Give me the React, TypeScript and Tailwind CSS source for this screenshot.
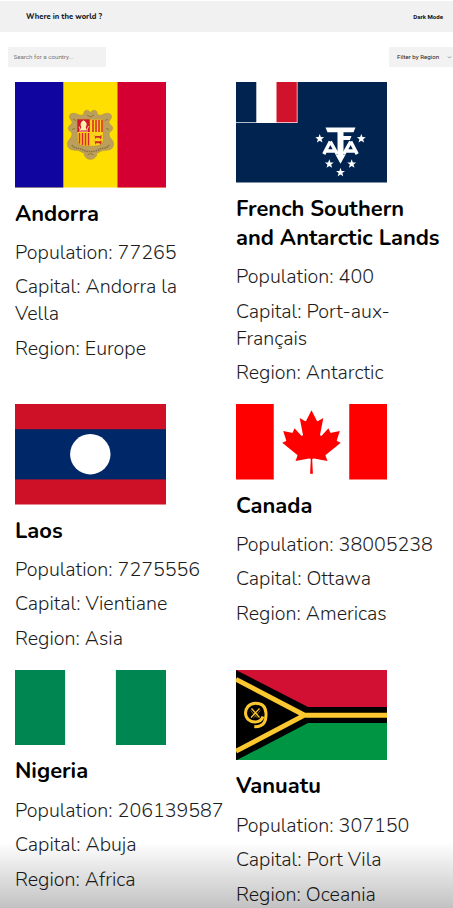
import type { ReactNode } from 'react';

function Star({ x, y, r = 4.7 }: { x: number; y: number; r?: number }) {
  const points = Array.from({ length: 10 }, (_, i) => {
    const radius = i % 2 === 0 ? r : r * 0.42;
    const angle = (Math.PI / 5) * i - Math.PI / 2;
    return `${(x + radius * Math.cos(angle)).toFixed(2)},${(y + radius * Math.sin(angle)).toFixed(2)}`;
  }).join(' ');
  return <polygon points={points} fill="#fff" />;
}

function Andorra() {
  return (
    <svg viewBox="0 0 151 105.5" preserveAspectRatio="none" className="block h-[105.5px] w-[151px]">
      <rect width="151" height="105.5" fill="#fedf00" />
      <rect width="48.3" height="105.5" fill="#10069f" />
      <rect x="102.5" width="48.5" height="105.5" fill="#d50032" />
      <path
        d="M75.500 30.500c-2-3-6.500-3-6.500.5-.3 2.500-3 2.500-5 2-4.500-2.500-9.500-2.500-9.500 1.800 0 2.700 3 3.500 2.500 6-1 2.500-4.500 3.500-3.500 6.500 1 2.500 3.500 2 3.500 5 0 4-4.500 5.500-4.500 9.500 0 5.500 4.500 6.500 9 6.500 3 0 4.500 2 7.500 2.500 0 4 3 6.500 6.500 6.500s6.500-2.500 6.500-6.500c3-.5 4.500-2.500 7.500-2.500 4.500 0 9-1 9-6.500 0-4-4.500-5.500-4.500-9.500 0-3 2.500-2.500 3.500-5 1-3-2.500-4-3.500-6.500-.5-2.500 2.500-3.300 2.500-6 0-4.300-5-4.300-9.500-1.800-2 .5-4.700.5-5-2 0-3.500-4.500-3.500-6.500-.5z"
        fill="#bd9f5c"
        stroke="#ab8e4c"
        strokeWidth=".6"
      />
      <path d="M57 63c2 4 6 2.500 9 4 6 3.500 13 3.500 19 0 3-1.500 7 0 9-4" fill="none" stroke="#84703c" strokeWidth="1.500" strokeDasharray="1.500 .8" />
      <path d="M58 37l3 1.500M93 37l-3 1.500M57 47.500l3-1M94 47.500l-3-1M72 33l3.500 2 3.500-2M72.500 73l3-1.500 3 1.500" fill="none" stroke="#8b763f" strokeWidth="1" />
      <path d="M62.300 37.300h26v20c0 6-4 7-13 7s-13-1-13-7z" fill="#fcd31a" stroke="#b18b3d" strokeWidth=".6" />
      <rect x="62.300" y="37.300" width="12.500" height="12.700" fill="#cf182c" />
      <path d="M68.500 38.300c-3.300 2-3.300 4.700-2.200 6.700l-1 3h6.400l-1-3c1.700-2 1.300-4.700-2.200-6.700z" fill="#fff2a8" />
      <path d="M64 44.500l1.500 4M73.500 44l-1.500 4M64 49h9" stroke="#ffe9c2" strokeWidth=".9" />
      <path d="M78 38v12M81 38v12M84 38v12M87 38v12M64.500 51v10.500M67.500 51v12M70.500 51v12.500M73.500 51v12.500" stroke="#d5272d" strokeWidth="1.500" />
      <path d="M78 52.500l2 1.500h5l1.500-1v3l-1 1.500-.8-1.800h-3.700l-1 1.800v-3zM78 58l2 1.300h5l1.500-.8v2.700l-1 1.500-.8-1.500h-3.700l-1 1.500v-3z" fill="#c92b25" />
    </svg>
  );
}

function SouthernLands() {
  return (
    <svg viewBox="0 0 151 100.500" preserveAspectRatio="none" className="block h-[100.5px] w-[151px]">
      <rect width="151" height="100.500" fill="#00244f" />
      <rect width="61.500" height="41" fill="#fff" />
      <rect width="20.300" height="40.300" fill="#00244f" />
      <rect x="40.500" width="20.300" height="40.300" fill="#d1122b" />
      <Star x={83.700} y={56.700} />
      <Star x={125.300} y={56.700} />
      <Star x={93.300} y={82} />
      <Star x={115.700} y={82} />
      <Star x={104.500} y={90.500} />
      <path d="M89.500 45.500h30l-2 4.700h-10v3.700h8l-1.600 4h-6.400v14.800h2l-5 9-5-9h2v-22.500h-10z" fill="#fff" />
      <path d="M94.300 59.500l-6.500 12.600M94.300 59.500l7 12.600M90.500 69h9M114.700 59.500l-7 12.600M114.700 59.500l6.500 12.600M109.500 69h9" stroke="#fff" strokeWidth="3.400" />
    </svg>
  );
}

function Laos() {
  return (
    <svg viewBox="0 0 151 100.500" preserveAspectRatio="none" className="block h-[100.5px] w-[151px]">
      <rect width="151" height="100.500" fill="#ce1126" />
      <rect y="25.200" width="151" height="50.200" fill="#002868" />
      <circle cx="75.300" cy="50.200" r="20.200" fill="#fff" />
    </svg>
  );
}

function Canada() {
  return (
    <svg viewBox="0 0 9600 4800" className="block h-[75.5px] w-[151px]">
      <rect width="9600" height="4800" fill="#fff" />
      <path
        d="M0 0h2400v4800H0zM7200 0h2400v4800H7200zM4890 4430l-45-863a95 95 0 0 1 111-98l859 151-116-320a65 65 0 0 1 20-73l941-762-212-99a65 65 0 0 1-34-79l186-572-542 115a65 65 0 0 1-73-38l-105-247-423 454a65 65 0 0 1-111-57l204-1052-327 189a65 65 0 0 1-91-27l-332-652-332 652a65 65 0 0 1-91 27l-327-189 204 1052a65 65 0 0 1-111 57l-423-454-105 247a65 65 0 0 1-73 38l-542-115 186 572a65 65 0 0 1-34 79l-212 99 941 762a65 65 0 0 1 20 73l-116 320 859-151a95 95 0 0 1 111 98l-45 863z"
        fill="#f00"
      />
    </svg>
  );
}

function Nigeria() {
  return (
    <svg viewBox="0 0 6 3" className="block h-[75.5px] w-[151px]">
      <path d="M0 0h2v3H0zM4 0h2v3H4z" fill="#008751" />
      <path d="M2 0h2v3H2z" fill="#fff" />
    </svg>
  );
}

function Vanuatu() {
  return (
    <svg viewBox="0 0 151 90.500" preserveAspectRatio="none" className="block h-[90.5px] w-[151px]">
      <rect width="151" height="45.200" fill="#d21034" />
      <rect y="45.200" width="151" height="45.300" fill="#009543" />
      <path d="M0 0l72 37h79v16H72L0 90.500z" fill="#000" />
      <path d="M0 9.300l68.500 35.900H151M0 81.200l68.500-36" fill="none" stroke="#fdc82f" strokeWidth="4.900" />
      <path d="M18.300 56.600c10 .5 12-6 11.700-13.500-.5-7-5-9.800-10.500-9.800-6.500 0-10 5-10 9.700 0 5.500 4.500 9 9.500 9 4 0 7-2.500 8-5.500" fill="none" stroke="#fdc82f" strokeWidth="3" />
      <path d="M15.500 38.500l8 9M23.500 38.500l-8.500 9" stroke="#fdc82f" strokeWidth="1.300" />
      <path d="M14.500 40.500l7 7.500M24.500 40.500l-7 7.500" stroke="#fdc82f" strokeWidth=".5" />
    </svg>
  );
}

interface CountryProps {
  name: string;
  population: number;
  capital: string;
  region: string;
  flag: ReactNode;
}

const countries: CountryProps[] = [
  { name: 'Andorra', population: 77265, capital: 'Andorra la Vella', region: 'Europe', flag: <Andorra /> },
  { name: 'French Southern and Antarctic Lands', population: 400, capital: 'Port-aux-Français', region: 'Antarctic', flag: <SouthernLands /> },
  { name: 'Laos', population: 7275556, capital: 'Vientiane', region: 'Asia', flag: <Laos /> },
  { name: 'Canada', population: 38005238, capital: 'Ottawa', region: 'Americas', flag: <Canada /> },
  { name: 'Nigeria', population: 206139587, capital: 'Abuja', region: 'Africa', flag: <Nigeria /> },
  { name: 'Vanuatu', population: 307150, capital: 'Port Vila', region: 'Oceania', flag: <Vanuatu /> },
];

function Country({ name, population, capital, region, flag }: CountryProps) {
  return (
    <article>
      {flag}
      <h2 className="mt-[12px] max-w-[209px] text-[21.9px] leading-[29.5px] font-bold text-black">{name}</h2>
      <div className="mt-[9.700px] flex max-w-[209px] flex-col gap-[7.500px] text-[19.650px] leading-[27px] font-light text-[#1c1c1c]">
        <p>Population: {population}</p>
        <p className="max-w-[185px]">Capital: {capital}</p>
        <p>Region: {region}</p>
      </div>
    </article>
  );
}

export default function App() {
  return (
    <div className="relative h-[908px] w-[453px] overflow-hidden bg-white pt-px font-['Nunito','Open_Sans',sans-serif]">
      <header className="flex h-[31px] items-center justify-between bg-[#f1f1f1] pr-[10px] pl-[26px]">
        <h1 className="text-[7.550px] font-extrabold text-[#17222b]">Where in the world ?</h1>
        <button className="font-['Roboto',sans-serif] text-[6.100px] font-bold text-[#111]">Dark Mode</button>
      </header>
      <div className="mt-[15px] flex h-5 items-center justify-between pl-2 font-['Roboto',sans-serif] text-[6.200px]">
        <input
          placeholder="Search for a country..."
          className="h-5 w-[98px] bg-[#f2f2f2] px-[5.500px] placeholder:text-[#777] placeholder:opacity-100"
        />
        <button className="flex h-5 w-16 items-center justify-between bg-[#f2f2f2] pt-px pr-[1px] pl-2 text-[#222]">
          Filter by Region
          <svg viewBox="0 0 6 4" className="h-[3px] w-[5px]" fill="none" stroke="#777">
            <path d="M1 .7l2 2 2-2" />
          </svg>
        </button>
      </div>
      <main className="mt-[15px] grid grid-cols-[221px_1fr] gap-y-[18px] pl-[15px]">
        {countries.map((country) => (
          <Country key={country.name} {...country} />
        ))}
      </main>
      <div className="pointer-events-none absolute inset-x-0 bottom-0 h-[66px] bg-linear-to-b from-transparent to-black/24" />
    </div>
  );
}
